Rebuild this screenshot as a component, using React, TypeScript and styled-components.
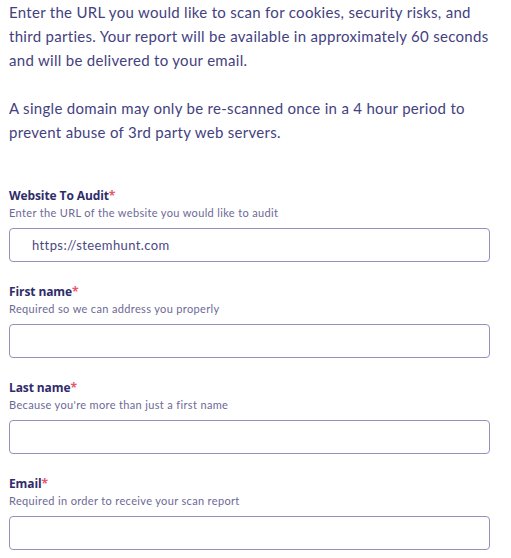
import React from "react";
import styled, { createGlobalStyle } from "styled-components";

const Global = createGlobalStyle`
  html, body { margin: 0; padding: 0; background: #ffffff; }
  body { font-family: "Lato", "Noto Sans", sans-serif; }
`;

const Page = styled.div`
  padding: 0 21px 0 9px;
  width: 511px;
  box-sizing: border-box;
`;

const Intro = styled.p`
  margin: 0 0 24px 0;
  font-size: 15px;
  line-height: 24px;
  letter-spacing: 0.3px;
  color: #44417f;
  white-space: nowrap;
  &:last-of-type { margin-bottom: 43px; }
`;

const Form = styled.form`
  display: flex;
  flex-direction: column;
  gap: 21px;
`;

const Field = styled.div`
  display: flex;
  flex-direction: column;
`;

const Label = styled.label`
  font-family: "Open Sans", "Noto Sans", sans-serif;
  font-weight: 700;
  font-size: 12px;
  line-height: 18px;
  color: #2f2c6b;
  letter-spacing: -0.1px;
`;

const Star = styled.span`
  color: #e8566a;
`;

const Help = styled.div`
  font-size: 11px;
  line-height: 16px;
  letter-spacing: 0.35px;
  color: #6c6996;
  margin-bottom: 7px;
`;

const Input = styled.input`
  box-sizing: border-box;
  width: 100%;
  height: 34px;
  border: 1px solid #9790bd;
  border-radius: 4px;
  padding: 0 22px;
  font-family: "Lato", "Noto Sans", sans-serif;
  font-size: 13px;
  letter-spacing: 0.4px;
  color: #4b4882;
  background: #fff;
  outline: none;
`;

const fields = [
  { label: "Website To Audit", help: "Enter the URL of the website you would like to audit", value: "https://steemhunt.com" },
  { label: "First name", help: "Required so we can address you properly", value: "" },
  { label: "Last name", help: "Because you're more than just a first name", value: "" },
  { label: "Email", help: "Required in order to receive your scan report", value: "" },
];

export default function App() {
  return (
    <Page>
      <Global />
      <Intro>
        Enter the URL you would like to scan for cookies, security risks, and<br />
        third parties. Your report will be available in approximately 60 seconds<br />
        and will be delivered to your email.
      </Intro>
      <Intro>
        A single domain may only be re-scanned once in a 4 hour period to<br />
        prevent abuse of 3rd party web servers.
      </Intro>
      <Form onSubmit={(e) => e.preventDefault()}>
        {fields.map((f) => (
          <Field key={f.label}>
            <Label>
              {f.label}
              <Star>*</Star>
            </Label>
            <Help>{f.help}</Help>
            <Input defaultValue={f.value} />
          </Field>
        ))}
      </Form>
    </Page>
  );
}
